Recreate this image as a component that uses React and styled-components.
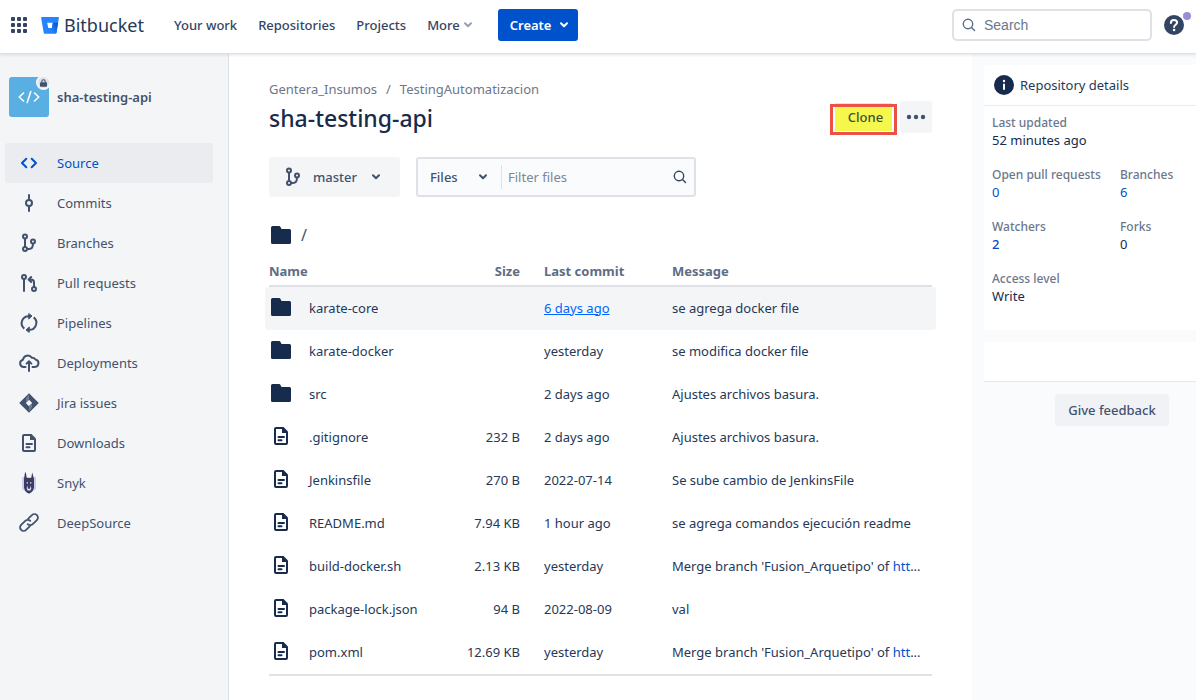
import React from "react";
import styled, { createGlobalStyle, css } from "styled-components";

const GlobalStyle = createGlobalStyle`
  *, *::before, *::after { box-sizing: border-box; }
  body {
    margin: 0;
    background: #fff;
    color: #172b4d;
    font-family: "Noto Sans", "Open Sans", sans-serif;
    font-size: 13px;
    line-height: 20px;
  }
  button, input, select { font: inherit; color: inherit; margin: 0; border: 0; padding: 0; background: none; }
  a { color: inherit; text-decoration: none; }
  h1, h2, p, dl, dd, ol, ul { margin: 0; padding: 0; }
  ol, ul { list-style: none; }
  svg { display: block; flex: none; }
`;

/* ---------- layout ---------- */
const Page = styled.div`
  display: flex;
  flex-direction: column;
  min-height: 100vh;
`;
const Body = styled.div`
  display: flex;
  flex: 1;
`;

/* ---------- top bar ---------- */
const TopBar = styled.header`
  display: flex;
  align-items: center;
  height: 53px;
  padding: 0 12px 3px 9px;
  background: #fff;
  box-shadow: 0 1px 0 #dfe1e8, 0 2px 3px rgba(9, 30, 66, 0.12);
  position: relative;
  z-index: 1;
`;
const IconButton = styled.button`
  display: flex;
  align-items: center;
  justify-content: center;
  width: 20px;
  height: 20px;
  color: #344563;
`;
const Brand = styled.a`
  display: flex;
  align-items: center;
  gap: 4px;
  width: 103px;
  margin: 0 30px 0 12px;
  font-size: 18px;
  font-weight: 400;
  color: #253858;
`;
const Nav = styled.nav`
  display: flex;
  align-items: center;
  gap: 21px;
  margin-right: 26px;
  font-weight: 500;
  color: #344563;
`;
const MoreButton = styled.button`
  display: flex;
  align-items: center;
  gap: 4px;
  font-weight: 500;
`;
const CreateButton = styled.button`
  display: flex;
  align-items: center;
  justify-content: space-between;
  width: 80px;
  height: 32px;
  padding: 0 10px 0 12px;
  border-radius: 3px;
  background: #0052cc;
  color: #fff;
  font-weight: 600;
`;
const SearchBox = styled.label`
  display: flex;
  align-items: center;
  gap: 8px;
  width: 200px;
  height: 32px;
  margin: 0 12px 0 auto;
  padding: 0 8px;
  border: 2px solid #dfe1e6;
  border-radius: 5px;
  color: #5e6c84;
  input {
    flex: 1;
    min-width: 0;
    font-family: "Liberation Sans", Arial, sans-serif;
    font-size: 14px;
    outline: none;
  }
  input::placeholder { color: #6b778c; opacity: 1; }
`;
const HelpButton = styled(IconButton)`
  position: relative;
  &::after {
    content: "";
    position: absolute;
    top: -3px;
    right: -7px;
    width: 8px;
    height: 8px;
    border-radius: 50%;
    background: #998dd9;
  }
`;

/* ---------- sidebar ---------- */
const Sidebar = styled.aside`
  flex: none;
  width: 229px;
  padding: 24px 15px 0 5px;
  background: #f4f5f7;
  border-right: 1px solid #dcdfe5;
`;
const Project = styled.div`
  display: flex;
  align-items: center;
  gap: 8px;
  padding-left: 4px;
  margin-bottom: 26px;
  font-weight: 600;
  color: #42526e;
`;
const Avatar = styled.span`
  position: relative;
  display: grid;
  place-items: center;
  width: 40px;
  height: 40px;
  border-radius: 3px;
  background: #59afe1;
`;
const LockBadge = styled.span`
  position: absolute;
  top: -2px;
  right: -2px;
  display: grid;
  place-items: center;
  width: 15px;
  height: 15px;
  border: 2px solid #f4f5f7;
  border-radius: 50%;
  background: #dfe1e6;
`;
const SideLink = styled.a`
  display: flex;
  align-items: center;
  gap: 16px;
  height: 40px;
  padding-left: 12px;
  border-radius: 3px;
  color: #42526e;
  ${(p) => p.$active && css`
    background: #ebecf0;
    color: #0052cc;
  `}
`;

/* ---------- main column ---------- */
const Main = styled.main`
  flex: 1;
  min-width: 0;
  padding: 26px 40px 24px;
`;
const Crumbs = styled.ol`
  display: flex;
  gap: 9px;
  color: #6b778c;
`;
const TitleRow = styled.div`
  display: flex;
  align-items: center;
  height: 32px;
  margin: 2px 0 24px;
`;
const Title = styled.h1`
  flex: 1;
  padding-top: 2px;
  font-size: 23px;
  line-height: 28px;
  font-weight: 500;
`;
const CloneButton = styled.button`
  position: relative;
  width: 57px;
  height: 28px;
  margin-right: 8px;
  padding-left: 4px;
  background: #f6f74c;
  color: #3f5138;
  font-weight: 500;
  &::after {
    content: "";
    position: absolute;
    inset: 1px -5px -4px -5px;
    border: 3px solid #ee4f46;
  }
`;
const MenuButton = styled.button`
  display: grid;
  place-items: center;
  width: 32px;
  height: 32px;
  border-radius: 3px;
  background: #f4f5f7;
  color: #42526e;
`;
const Toolbar = styled.div`
  display: flex;
  gap: 16px;
  margin-bottom: 26px;
  color: #42526e;
  font-weight: 500;
`;
const BranchButton = styled.button`
  display: flex;
  align-items: center;
  gap: 8px;
  width: 131px;
  height: 40px;
  padding: 0 20px 0 12px;
  border-radius: 3px;
  background: #f4f5f7;
  font-weight: 500;
  text-align: left;
  span { flex: 1; }
`;
const Filter = styled.div`
  display: flex;
  align-items: center;
  width: 280px;
  height: 40px;
  padding-right: 4px;
  border: 2px solid #dfe1e6;
  border-radius: 3px;
  background: #fafbfc;
`;
const TypeSelect = styled.label`
  position: relative;
  display: flex;
  align-items: center;
  width: 84px;
  height: 24px;
  border-right: 1px solid #dfe1e6;
  select {
    appearance: none;
    width: 100%;
    padding-left: 12px;
    outline: none;
  }
  svg {
    position: absolute;
    right: 14px;
    pointer-events: none;
  }
`;
const FilterInput = styled.input`
  flex: 1;
  min-width: 0;
  padding: 0 6px;
  outline: none;
  font-weight: 400;
  &::placeholder { color: #7a869a; opacity: 1; }
`;
const Path = styled.div`
  display: flex;
  align-items: center;
  gap: 8px;
  margin-bottom: 12px;
  font-size: 16px;
  color: #42526e;
  svg { color: #172b4d; }
`;

/* ---------- file table ---------- */
const FileTable = styled.table`
  width: 100%;
  table-layout: fixed;
  border-collapse: separate;
  border-spacing: 0;
  border-bottom: 2px solid #dfe1e6;
  color: #253858;
`;
const Th = styled.th`
  width: ${(p) => p.$w || "auto"};
  padding: 2px 24px 0 0;
  height: 28px;
  border-bottom: 2px solid #dfe1e6;
  color: #5e6c84;
  font-weight: 700;
  text-align: ${(p) => p.$align || "left"};
  vertical-align: top;
`;
const Td = styled.td`
  height: 43px;
  padding: 0 ${(p) => (p.$end ? "7px" : "24px")} 2px 0;
  text-align: ${(p) => p.$align || "left"};
  overflow: hidden;
  text-overflow: ellipsis;
  white-space: nowrap;
`;
const NameCell = styled(Td)`
  padding: 0 0 2px;
  overflow: visible;
`;
const FileLink = styled.a`
  display: flex;
  align-items: center;
  gap: 16px;
  svg {
    margin-bottom: 2px;
    color: #172b4d;
  }
`;
const Row = styled.tr`
  ${(p) => p.$hovered && css`
    td { background: #f4f5f7; position: relative; overflow: visible; }
    td:first-child::before, td:last-child::after {
      content: "";
      position: absolute;
      top: 0;
      bottom: 0;
      width: 4px;
      background: #f4f5f7;
    }
    td:first-child::before { left: -4px; border-radius: 3px 0 0 3px; }
    td:last-child::after { right: -4px; border-radius: 0 3px 3px 0; }
  `}
`;
const DateLink = styled.a`
  ${(p) => p.$hovered && css`
    color: #0065ff;
    text-decoration: underline;
  `}
`;
const BlueLink = styled.a`
  color: #0052cc;
`;

/* ---------- details ---------- */
const Details = styled.aside`
  flex: none;
  width: 224px;
  padding: 12px 0 0 12px;
  background: #fafbfc;
`;
const Card = styled.section`
  background: #fff;
  border-radius: 3px 0 0 3px;
  margin-bottom: 12px;
`;
const CardTitle = styled.h2`
  display: flex;
  align-items: center;
  gap: 4px;
  height: 41px;
  padding-left: 8px;
  border-bottom: 1px solid #ebecf0;
  font-size: 13px;
  font-weight: 400;
  color: #253858;
`;
const Facts = styled.dl`
  display: grid;
  grid-template-columns: 128px 1fr;
  row-gap: 16px;
  padding: 8px 0 24px 8px;
`;
const Fact = styled.div`
  grid-column: ${(p) => (p.$wide ? "1 / -1" : "auto")};
  height: 36px;
  dt {
    font-size: 12px;
    line-height: 18px;
    font-weight: 500;
    color: #6b778c;
  }
  dd {
    line-height: 16px;
    font-weight: ${(p) => (p.$strong ? 500 : 400)};
  }
`;
const EmptyCard = styled.section`
  height: 40px;
  background: #fff;
  border-bottom: 1px solid #e4e7ec;
  border-radius: 3px 0 0 0;
`;
const Feedback = styled.button`
  display: block;
  width: 114px;
  height: 32px;
  margin: 12px 27px 0 auto;
  border-radius: 3px;
  background: #f1f2f5;
  color: #42526e;
  font-weight: 500;
`;

/* ---------- icons ---------- */
const Svg = ({ size = 24, children }) => (
  <svg width={size} height={size} viewBox={`0 0 ${size} ${size}`} fill="none" stroke="currentColor" strokeWidth="2" strokeLinecap="round" strokeLinejoin="round" aria-hidden="true">
    {children}
  </svg>
);
const Chevron = ({ color }) => (
  <svg width="8" height="6" viewBox="0 0 8 6" fill="none" stroke={color || "currentColor"} strokeWidth="2" strokeLinecap="round" strokeLinejoin="round" aria-hidden="true">
    <path d="M1 1.2 4 4.3 7 1.2" />
  </svg>
);
const SearchIcon = () => (
  <svg width="14" height="14" viewBox="0 0 14 14" fill="none" stroke="currentColor" strokeWidth="1.4" strokeLinecap="round" aria-hidden="true">
    <circle cx="6" cy="6" r="4.7" />
    <path d="m9.5 9.5 3 3" />
  </svg>
);
const AppsIcon = () => (
  <svg width="16" height="16" viewBox="0 0 16 16" fill="currentColor" aria-hidden="true">
    {[0, 6, 12].map((y) => [0, 6, 12].map((x) => <rect key={`${x}-${y}`} x={x} y={y} width="4" height="4" rx="1" />))}
  </svg>
);
const BucketLogo = () => (
  <svg width="19" height="17" viewBox="0 0 19 17" aria-hidden="true">
    <defs>
      <linearGradient id="bucket" x1="18" y1="5" x2="9" y2="12" gradientUnits="userSpaceOnUse">
        <stop offset="0.15" stopColor="#0052cc" />
        <stop offset="1" stopColor="#2684ff" />
      </linearGradient>
    </defs>
    <path fill="#2684ff" d="M.7 0h16.6a.6.6 0 0 1 .6.7l-2.4 15a.8.8 0 0 1-.8.7H3.5a.8.8 0 0 1-.8-.7L.1.7A.6.6 0 0 1 .7 0ZM7.3 11h3.6l.9-5.2H6.2Z" />
    <path fill="url(#bucket)" d="M17.1 5.8h-5.3L10.9 11H7.3L3 16.1c.1.2.3.3.5.3h11.2c.4 0 .7-.3.8-.7Z" />
  </svg>
);
const HelpIcon = () => (
  <svg width="20" height="20" viewBox="0 0 20 20" fill="none" aria-hidden="true">
    <circle cx="10" cy="10" r="10" fill="#344563" />
    <path d="M6.9 7.9c0-1.9 1.3-3 3.1-3s3.1 1.1 3.1 2.7c0 2.1-3 2.1-3 4.4" stroke="#fff" strokeWidth="2" strokeLinecap="round" />
    <circle cx="10.1" cy="15" r="1.3" fill="#fff" />
  </svg>
);
const InfoIcon = () => (
  <svg width="24" height="24" viewBox="0 0 24 24" aria-hidden="true">
    <circle cx="12" cy="12" r="10" fill="#172b4d" />
    <rect x="11" y="10.5" width="2" height="6.5" rx="1" fill="#fff" />
    <circle cx="12" cy="8" r="1.2" fill="#fff" />
  </svg>
);
const CodeIcon = () => (
  <svg width="22" height="14" viewBox="0 0 22 14" fill="none" stroke="#fff" strokeWidth="1.6" strokeLinecap="round" strokeLinejoin="round" aria-hidden="true">
    <path d="M5.5 3 1.2 7l4.3 4M16.5 3l4.3 4-4.3 4M12.8 1.5l-3.6 11" />
  </svg>
);
const LockIcon = () => (
  <svg width="7" height="8" viewBox="0 0 7 8" aria-hidden="true">
    <rect y="3.3" width="7" height="4.5" rx="0.8" fill="#42526e" />
    <path d="M1.8 3.6V2.4a1.7 1.7 0 0 1 3.4 0v1.2" fill="none" stroke="#42526e" strokeWidth="1.1" />
  </svg>
);
const SourceIcon = () => (
  <Svg><path d="m9.3 7.7-4.3 4.3 4.3 4.3M14.7 7.7l4.3 4.3-4.3 4.3" /></Svg>
);
const CommitIcon = () => (
  <Svg><circle cx="12" cy="12" r="3" /><path d="M12 4v4.500M12 15.500V20" /></Svg>
);
const BranchIcon = () => (
  <Svg>
    <circle cx="8" cy="5.6" r="2" /><circle cx="8" cy="18" r="2" /><circle cx="16" cy="10.4" r="2" />
    <path d="M8 8v7.600M10.400 18H12c2.400 0 4-1.500 4-5.200" />
  </Svg>
);
const PullIcon = () => (
  <Svg>
    <circle cx="7" cy="6" r="2" /><circle cx="17" cy="18" r="2" />
    <path d="M7 8.500V20M17 15.500v-4c0-2-1-3-3-3h-1.500M14.200 6l-2.600 2.500 2.600 2.500" />
  </Svg>
);
const PipelineIcon = () => (
  <Svg>
    <path strokeLinecap="butt" d="M7.300 17.600A7 7 0 0 1 12.500 5.200M16.700 6.400A7 7 0 0 1 11.500 18.800" />
    <path fill="currentColor" strokeWidth="1" d="M12 2.800 15 5l-3 2.800ZM12 21.200 9 19l3-2.800Z" />
  </Svg>
);
const DeployIcon = () => (
  <Svg>
    <path d="M8.500 16H6.600A3.700 3.700 0 0 1 6 8.700 4.800 4.800 0 0 1 14.800 6.800 4.300 4.300 0 0 1 18.500 8.500a3.800 3.800 0 0 1-.6 7.500H15.500M12 20v-9.200M9.600 12.600l2.400-2.400 2.400 2.400" />
  </Svg>
);
const JiraIcon = () => (
  <svg width="24" height="24" viewBox="0 0 24 24" aria-hidden="true">
    <path fill="#42526e" fillRule="evenodd" d="M12 2.200 21.800 12 12 21.800 2.200 12ZM12 8.800 8.800 12l3.200 3.200 3.200-3.200Z" />
    <path fill="#6f7c93" d="M12 3.600v5.200L9.600 11.200C8.100 9.200 8.700 6.900 12 3.600ZM12 20.400v-5.200l2.400-2.400c1.500 2 .9 4.300-2.400 7.600Z" />
  </svg>
);
const FileIcon = () => (
  <Svg>
    <path d="M13.500 4H7a1 1 0 0 0-1 1v14a1 1 0 0 0 1 1h10a1 1 0 0 0 1-1V9.500M9.500 13h5.500M9.500 16.300h3" />
    <path d="M13 3h1.500L19 7.500V9h-6Z" fill="currentColor" stroke="none" />
  </Svg>
);
const SnykIcon = () => (
  <svg width="24" height="24" viewBox="0 0 24 24" aria-hidden="true">
    <path fill="#c9d1e8" d="M5 6h14v12l-7 4.500L5 18Z" />
    <path fill="#3b3b63" d="M8.800 1.500 9.800 7h4.400l1-5.500 1.800 6.200v8.300c0 2.500-2.500 6.500-5 6.500s-5-4-5-6.500V7.700l1-6.200Z" />
    <path fill="#dfe4f2" d="M9.600 11.300h1.400v1.200H9.600zM13 11.300h1.400v1.200H13zM10.300 14.500l.7 3.200h2l.7-3.200.6 2.700-.9 2.200h-2.800l-.9-2.200Z" />
  </svg>
);
const LinkIcon = () => (
  <Svg>
    <path d="m11.200 7.600 3.700-3.500a3.500 3.500 0 0 1 5 5l-4.200 4.100a3.500 3.500 0 0 1-5-.1M12.800 15.400l-3.700 3.500a3.500 3.500 0 0 1-5-5l4.200-4.100a3.500 3.500 0 0 1 5 .1" strokeWidth="1.8" />
  </Svg>
);
const FolderIcon = () => (
  <Svg>
    <path stroke="none" fill="currentColor" d="M3.500 3H10c.7 0 1.200.3 1.500.9l1 2.100h8a1.500 1.500 0 0 1 1.500 1.500v12a1.500 1.500 0 0 1-1.500 1.500h-17A1.500 1.500 0 0 1 2 19.500v-15A1.500 1.500 0 0 1 3.500 3Z" />
  </Svg>
);
const DotsIcon = () => (
  <svg width="20" height="6" viewBox="0 0 20 6" fill="currentColor" aria-hidden="true">
    <circle cx="3" cy="3" r="2.2" /><circle cx="10" cy="3" r="2.2" /><circle cx="17" cy="3" r="2.2" />
  </svg>
);

/* ---------- data ---------- */
const sections = [
  ["Source", SourceIcon],
  ["Commits", CommitIcon],
  ["Branches", BranchIcon],
  ["Pull requests", PullIcon],
  ["Pipelines", PipelineIcon],
  ["Deployments", DeployIcon],
  ["Jira issues", JiraIcon],
  ["Downloads", FileIcon],
  ["Snyk", SnykIcon],
  ["DeepSource", LinkIcon],
];
const merge = <>Merge branch 'Fusion_Arquetipo' of <BlueLink href="#">htt</BlueLink>...</>;
const files = [
  { name: "karate-core", folder: true, date: "6 days ago", message: "se agrega docker file", hovered: true },
  { name: "karate-docker", folder: true, date: "yesterday", message: "se modifica docker file" },
  { name: "src", folder: true, date: "2 days ago", message: "Ajustes archivos basura." },
  { name: ".gitignore", size: "232 B", date: "2 days ago", message: "Ajustes archivos basura." },
  { name: "Jenkinsfile", size: "270 B", date: "2022-07-14", message: "Se sube cambio de JenkinsFile" },
  { name: "README.md", size: "7.94 KB", date: "1 hour ago", message: "se agrega comandos ejecución readme" },
  { name: "build-docker.sh", size: "2.13 KB", date: "yesterday", message: merge },
  { name: "package-lock.json", size: "94 B", date: "2022-08-09", message: "val" },
  { name: "pom.xml", size: "12.69 KB", date: "yesterday", message: merge },
];

export default function App() {
  return (
    <Page>
      <GlobalStyle />
      <TopBar>
        <IconButton aria-label="Switch to"><AppsIcon /></IconButton>
        <Brand href="#"><BucketLogo />Bitbucket</Brand>
        <Nav>
          <a href="#">Your work</a>
          <a href="#">Repositories</a>
          <a href="#">Projects</a>
          <MoreButton>More<Chevron color="#97a0af" /></MoreButton>
        </Nav>
        <CreateButton>Create<Chevron /></CreateButton>
        <SearchBox>
          <SearchIcon />
          <input type="text" placeholder="Search" aria-label="Search" />
        </SearchBox>
        <HelpButton aria-label="Help"><HelpIcon /></HelpButton>
      </TopBar>
      <Body>
        <Sidebar>
          <Project>
            <Avatar><CodeIcon /><LockBadge><LockIcon /></LockBadge></Avatar>
            sha-testing-api
          </Project>
          <nav aria-label="Repository">
            {sections.map(([label, Icon], i) => (
              <SideLink key={label} href="#" $active={i === 0}><Icon />{label}</SideLink>
            ))}
          </nav>
        </Sidebar>
        <Main>
          <Crumbs>
            <li><a href="#">Gentera_Insumos</a></li>
            <li aria-hidden="true">/</li>
            <li><a href="#">TestingAutomatizacion</a></li>
          </Crumbs>
          <TitleRow>
            <Title>sha-testing-api</Title>
            <CloneButton>Clone</CloneButton>
            <MenuButton aria-label="More actions"><DotsIcon /></MenuButton>
          </TitleRow>
          <Toolbar>
            <BranchButton><BranchIcon /><span>master</span><Chevron /></BranchButton>
            <Filter>
              <TypeSelect>
                <select aria-label="Filter type"><option>Files</option></select>
                <Chevron />
              </TypeSelect>
              <FilterInput type="text" placeholder="Filter files" aria-label="Filter files" />
              <IconButton aria-label="Search files"><SearchIcon /></IconButton>
            </Filter>
          </Toolbar>
          <Path><FolderIcon />/</Path>
          <FileTable>
            <thead>
              <tr>
                <Th>Name</Th>
                <Th $w="96px" $align="right">Size</Th>
                <Th $w="128px">Last commit</Th>
                <Th $w="260px">Message</Th>
              </tr>
            </thead>
            <tbody>
              {files.map((f) => (
                <Row key={f.name} $hovered={f.hovered}>
                  <NameCell>
                    <FileLink href="#">{f.folder ? <FolderIcon /> : <FileIcon />}{f.name}</FileLink>
                  </NameCell>
                  <Td $align="right">{f.size}</Td>
                  <Td><DateLink href="#" $hovered={f.hovered}>{f.date}</DateLink></Td>
                  <Td $end>{f.message}</Td>
                </Row>
              ))}
            </tbody>
          </FileTable>
        </Main>
        <Details>
          <Card>
            <CardTitle><InfoIcon />Repository details</CardTitle>
            <Facts>
              <Fact $wide><dt>Last updated</dt><dd>52 minutes ago</dd></Fact>
              <Fact><dt>Open pull requests</dt><dd><BlueLink href="#">0</BlueLink></dd></Fact>
              <Fact><dt>Branches</dt><dd><BlueLink href="#">6</BlueLink></dd></Fact>
              <Fact $strong><dt>Watchers</dt><dd><BlueLink href="#">2</BlueLink></dd></Fact>
              <Fact><dt>Forks</dt><dd>0</dd></Fact>
              <Fact $wide><dt>Access level</dt><dd>Write</dd></Fact>
            </Facts>
          </Card>
          <EmptyCard />
          <Feedback>Give feedback</Feedback>
        </Details>
      </Body>
    </Page>
  );
}
